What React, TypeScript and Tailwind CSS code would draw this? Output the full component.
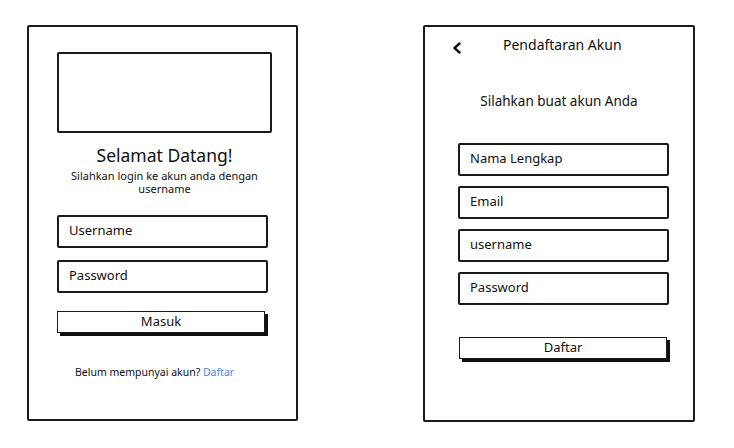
import React from "react";

const font = { fontFamily: '"Noto Sans", "Open Sans", sans-serif' };

function Field({ label }: { label: string }) {
  return (
    <div className="h-[33px] w-[211px] border-2 border-[#1a1a1a] rounded-[2px] flex items-center pl-[10px] pb-[1px] text-[13px] text-[#111]">
      {label}
    </div>
  );
}

function Btn({ label }: { label: string }) {
  return (
    <div className="h-[22px] w-[208px] border-[1.5px] border-[#1a1a1a] shadow-[3px_3px_0_0_#111] flex items-center justify-center text-[13px] text-[#111]">
      {label}
    </div>
  );
}

export default function App() {
  return (
    <div className="w-[734px] h-[448px] bg-white flex pl-[27px] pt-[25px] gap-[125px]" style={font}>
      {/* Login frame */}
      <div className="w-[271px] h-[396px] border-2 border-[#1a1a1a] rounded-[2px] flex flex-col pl-[28px] pt-[25px]">
        <div className="w-[215px] h-[81px] border-2 border-[#1a1a1a] rounded-[2px]" />
        <div className="w-[215px] mt-[11px] text-center text-[17.5px] leading-[22px] text-[#111]">Selamat Datang!</div>
        <div className="w-[215px] mt-[3px] text-center text-[11px] leading-[13px] text-[#111] px-[12px]">
          Silahkan login ke akun anda dengan username
        </div>
        <div className="mt-[20px]">
          <Field label="Username" />
        </div>
        <div className="mt-[12px]">
          <Field label="Password" />
        </div>
        <div className="mt-[18px]">
          <Btn label="Masuk" />
        </div>
        <div className="mt-[32px] pl-[18px] text-[10.5px] leading-[15px] text-[#111] whitespace-nowrap">
          Belum mempunyai akun? <span className="text-[#4a86e8]">Daftar</span>
        </div>
      </div>

      {/* Register frame */}
      <div className="w-[272px] h-[397px] border-2 border-[#1a1a1a] rounded-[2px] flex flex-col">
        <div className="flex items-center pl-[27px] pt-[8px] h-[26px]">
          <svg width="10" height="12" viewBox="0 0 10 12" className="shrink-0 mt-[8px]">
            <path d="M7.5 1.5 L2.5 6 L7.5 10.5" fill="none" stroke="#111" strokeWidth="2.4" strokeLinecap="round" strokeLinejoin="round" />
          </svg>
          <div className="ml-[41px] text-[14px] text-[#111]">Pendaftaran Akun</div>
        </div>
        <div className="mt-[38px] text-center text-[13.5px] leading-[20px] text-[#111]">Silahkan buat akun Anda</div>
        <div className="flex flex-col pl-[33px] mt-[32px] gap-[10px]">
          <Field label="Nama Lengkap" />
          <Field label="Email" />
          <Field label="username" />
          <Field label="Password" />
        </div>
        <div className="pl-[34px] mt-[32px]">
          <Btn label="Daftar" />
        </div>
      </div>
    </div>
  );
}
